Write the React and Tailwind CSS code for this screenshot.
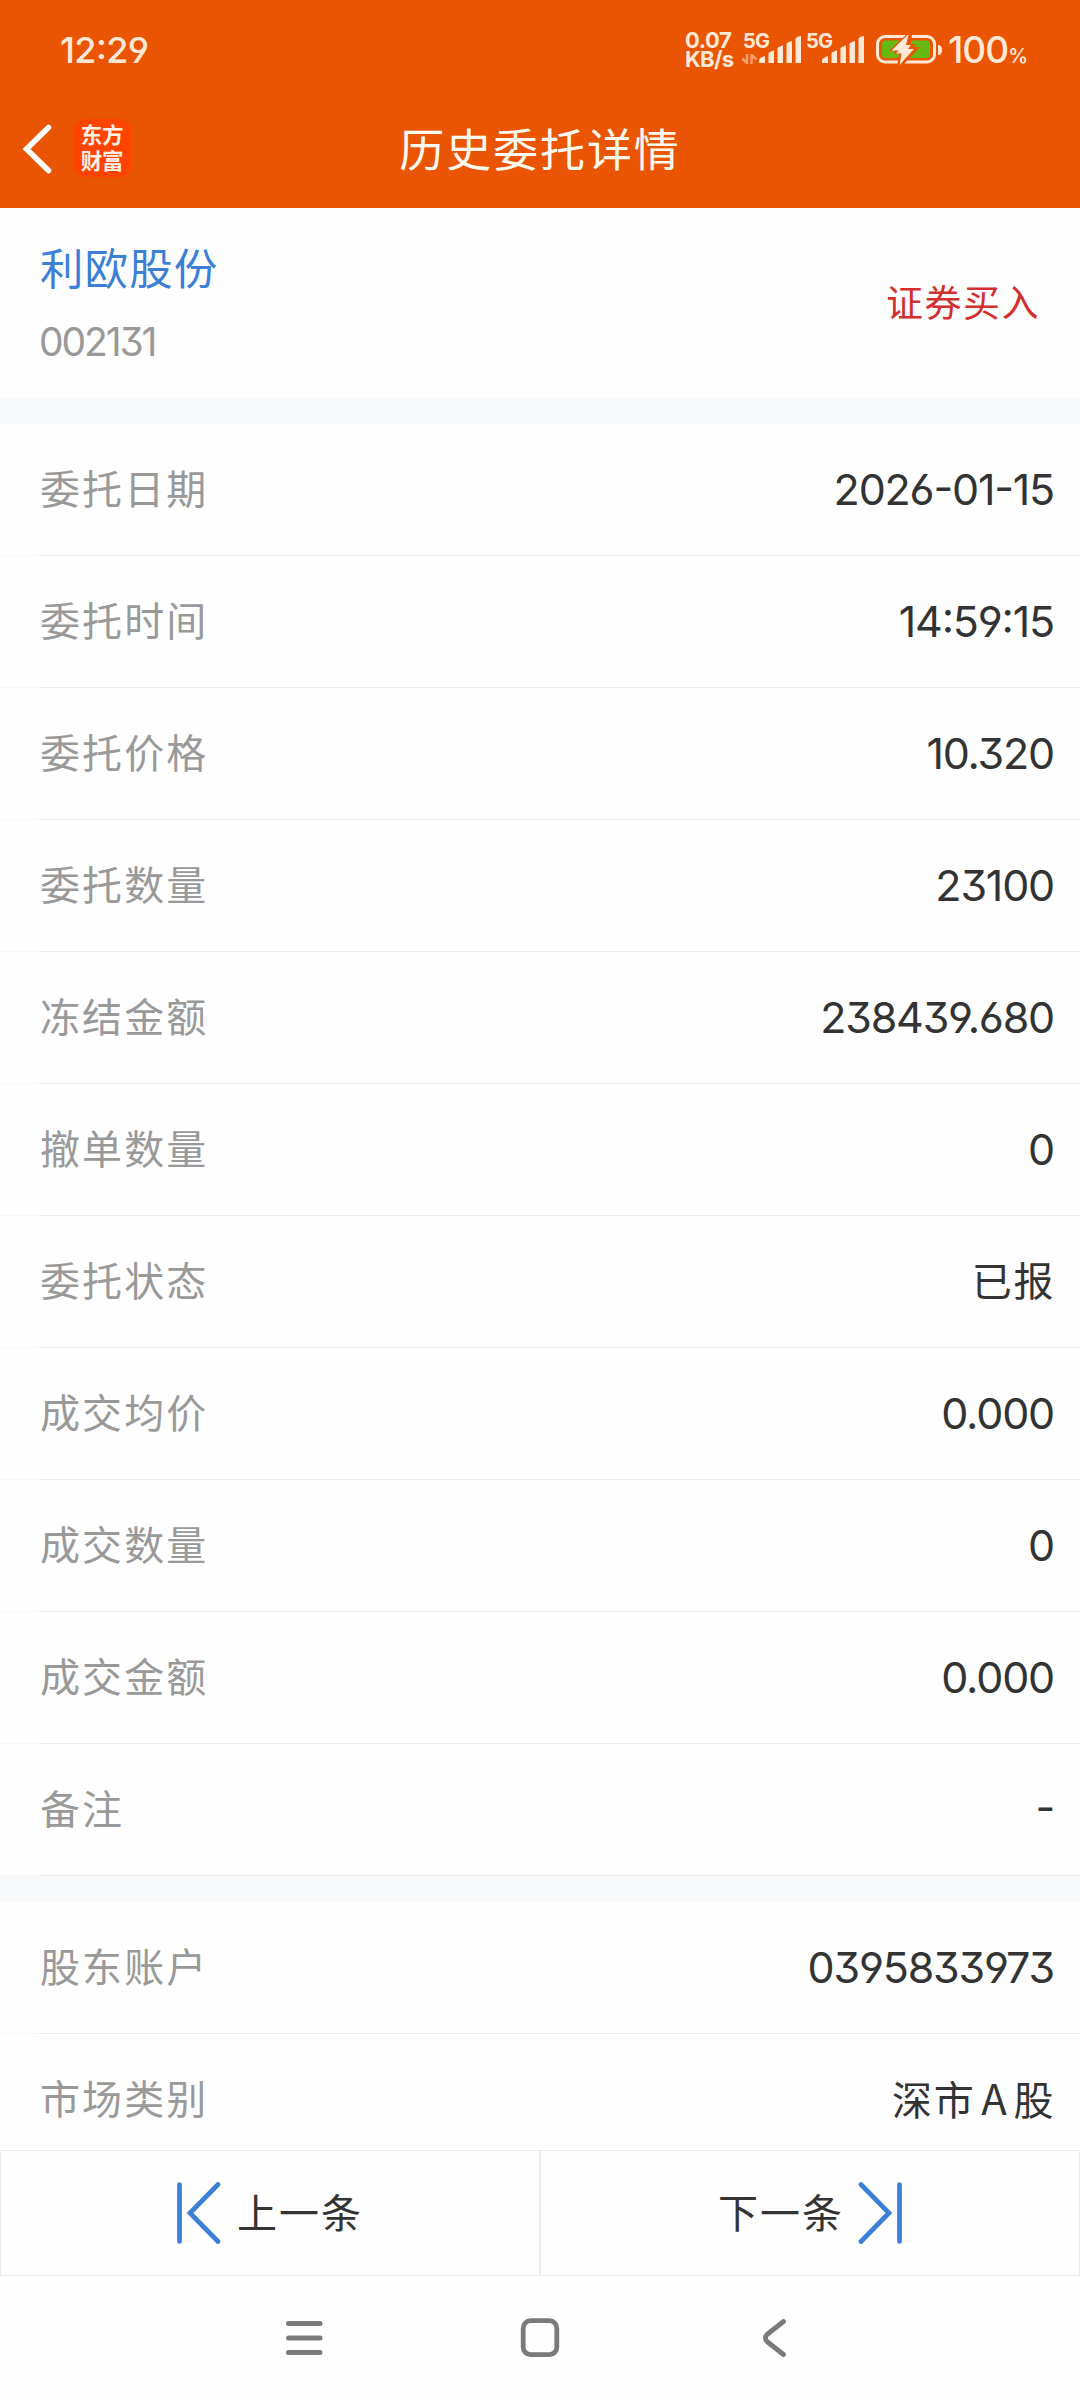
const CJK = "font-['Noto_Sans_CJK_SC',sans-serif]";
const NUM =
  "font-['Inter','Noto_Sans_CJK_SC',sans-serif] [font-feature-settings:'cv03','cv04','cv09','case']";

const orderRows = [
  ['委托日期', '2026-01-15'],
  ['委托时间', '14:59:15'],
  ['委托价格', '10.320'],
  ['委托数量', '23100'],
  ['冻结金额', '238439.680'],
  ['撤单数量', '0'],
  ['委托状态', '已报'],
  ['成交均价', '0.000'],
  ['成交数量', '0'],
  ['成交金额', '0.000'],
  ['备注', '-'],
];

const accountRows = [
  ['股东账户', '0395833973'],
  ['市场类别', <>深市<span className="ml-[6px] mr-[5px] text-[42px]">A</span>股</>],
];

function Row({ label, value }) {
  const isCjk = typeof value !== 'string' || /[\u4e00-\u9fff]/.test(value);
  return (
    <div className="flex h-[132px] shrink-0 flex-col">
      <div className="flex flex-1 items-center justify-between pl-10 pr-[26px]">
        <span className={`${CJK} mb-[5px] text-[40px] leading-none tracking-[2.1px] text-[#999999]`}>{label}</span>
        {isCjk ? (
          <span className={`${CJK} -mr-px mb-[5px] text-[40px] leading-none tracking-[1.6px] text-[#333333]`}>{value}</span>
        ) : (
          <span className={`${NUM} text-[43px] leading-none tracking-[-1.2px] text-[#333333]`}>{value}</span>
        )}
      </div>
      <div className="flex h-px">
        <div className="w-[39px] bg-[#f8f8f8]" />
        <div className="flex-1 bg-[#ebebeb]" />
      </div>
    </div>
  );
}

function Signal() {
  return (
    <svg width="42" height="27" viewBox="0 0 42 27" fill="#ffe9d6">
      <path d="M0 27v-2.500q0-2.500 6-4.500V27z" />
      <path d="M9.500 27V17.500q0-1.500 5.500-3V27z" />
      <path d="M18.500 27V12.500q0-1.500 5.500-3V27z" />
      <path d="M27.500 27V8q0-1.500 5.500-3V27z" />
      <path d="M36.500 27V3Q36.500 1 42 0v27z" />
    </svg>
  );
}

function StatusBar() {
  return (
    <div className="flex h-[100px] items-start justify-between pl-[60px] text-[#ffe9d6]">
      <span className={`${NUM} mt-[32px] text-[36px] font-medium leading-[36px] tracking-[-0.6px]`}>12:29</span>
      <div className="flex w-[396px] items-start">
        <div className={`${NUM} mt-[31px] w-[56px] pl-px text-[22px] font-bold leading-[19px]`}>
          <div className="tracking-[-0.4px]">0.07</div>
          <div className="tracking-[-0.7px]">KB/s</div>
        </div>
        <div className="relative ml-[1px] h-[70px] w-[64px]">
          <span className={`${NUM} absolute left-[2px] top-[31px] text-[20px] font-bold leading-[20px] tracking-[-0.8px]`}>5G</span>
          <svg className="absolute left-[1px] top-[54px]" width="15" height="10" viewBox="0 0 15 10" fill="none" stroke="#f7a06d" strokeWidth="2.500">
            <path d="M5 0v9L0 4.500M9.500 10V1l5 4.500" />
          </svg>
          <div className="absolute left-[18px] top-[36px]"><Signal /></div>
        </div>
        <div className="relative h-[70px] w-[71px]">
          <span className={`${NUM} absolute left-[1px] top-[31px] text-[20px] font-bold leading-[20px] tracking-[-0.8px]`}>5G</span>
          <div className="absolute left-[17px] top-[36px]"><Signal /></div>
        </div>
        <svg className="mt-[34px]" width="66" height="32" viewBox="0 0 66 32">
          <rect x="1.500" y="2.500" width="57" height="25.500" rx="7.500" fill="none" stroke="#ffe9d6" strokeWidth="3" />
          <rect x="6" y="6.500" width="48" height="17.500" rx="3.500" fill="#66b812" />
          <path d="M31 0 13 17h6l-2 3h6l-2 12h5L44 13h-6l2-3h-5l1-10z" fill="#ea5504" />
          <path d="M31.500 1 15.500 16.500h7l-2.500 3h5.500L23.500 31 38 15h-6l3-4h-5l2.500-10z" fill="#ffe9d6" />
          <path d="M62 11q4 0 4 5t-4 5z" fill="#ffe9d6" />
        </svg>
        <div className={`${NUM} ml-[6px] mt-[32px] flex items-baseline leading-[36px]`}>
          <span className="text-[37px] font-medium tracking-[-1px]">100</span>
          <span className="text-[20px] font-medium">%</span>
        </div>
      </div>
    </div>
  );
}

function TitleBar() {
  return (
    <div className="grid h-[108px] grid-cols-[1fr_auto_1fr] items-start">
      <div className="flex items-start pl-[22px] pt-[19px]">
        <svg className="mt-[5px]" width="30" height="50" viewBox="0 0 30 50" fill="none" stroke="#ffffff" strokeWidth="5.500" strokeLinejoin="miter" strokeLinecap="round">
          <path d="M26.500 3.500 4.500 25l22 21.500" />
        </svg>
        <div className={`${CJK} ml-[21px] grid size-[58px] content-center justify-center rounded-[13px] bg-[#ff4400] pb-[3px] text-[21.5px] font-bold leading-[26px] tracking-[-0.3px] text-[#fff1e6]`}>
          <span>东方</span>
          <span>财富</span>
        </div>
      </div>
      <h1 className={`${CJK} pt-[21px] text-[45px] leading-[54px] tracking-[1.9px] text-[#fffaf0]`}>历史委托详情</h1>
      <div />
    </div>
  );
}

function StepIcon({ flip }) {
  return (
    <svg className={flip ? '-scale-x-100' : ''} width="44" height="62" viewBox="0 0 44 62" fill="none" stroke="#3b7fd6" strokeWidth="4.700" strokeLinecap="round" strokeLinejoin="miter">
      <path d="M2.500 2.500v57M41 2.500 13 31l28 28.500" />
    </svg>
  );
}

export default function App() {
  return (
    <div className="flex h-[2400px] w-[1080px] flex-col overflow-hidden bg-[#fefefe]">
      <header className="h-[208px] shrink-0 bg-[#ea5504]">
        <StatusBar />
        <TitleBar />
      </header>

      <section className="flex h-[190px] shrink-0 items-start justify-between pl-10 pr-10">
        <div className="pt-[35px]">
          <div className={`${CJK} text-[43.5px] leading-[48px] tracking-[1.1px] text-[#3b7fd6]`}>利欧股份</div>
          <div className={`${NUM} -ml-px mt-[31px] text-[39px] leading-[40px] tracking-[-2.1px] text-[#999999]`}>002131</div>
        </div>
        <div className={`${CJK} pt-[69px] text-[37px] leading-[48px] tracking-[1.5px] text-[#d32f2f]`}>证券买入</div>
      </section>

      <div className="h-[26px] shrink-0 bg-[#f7f8fa]" />
      <section className="shrink-0">
        {orderRows.map(([label, value]) => <Row key={label} label={label} value={value} />)}
      </section>
      <div className="h-[26px] shrink-0 bg-[#f7f8fa]" />
      <section className="h-[248px] shrink-0 overflow-hidden">
        {accountRows.map(([label, value]) => <Row key={label} label={label} value={value} />)}
      </section>

      <div className={`${CJK} grid h-[126px] shrink-0 grid-cols-2 text-[40px] leading-none tracking-[2px] text-[#333333]`}>
        <button className="flex items-center border border-[#ebebeb] pl-[176px]">
          <StepIcon />
          <span className="mb-[5px] ml-[16px]">上一条</span>
        </button>
        <button className="flex items-center border border-[#ebebeb] pl-[177px]">
          <span className="mb-[5px] mr-[14px]">下一条</span>
          <StepIcon flip />
        </button>
      </div>

      <nav className="flex flex-1 items-start pl-[286px] pt-[42px]">
        <svg width="500" height="40" viewBox="0 0 500 40" fill="none" stroke="#7a7a7a" strokeLinecap="round" strokeLinejoin="round">
          <path d="M2.500 5.500h31.500M2.500 20h31.500M2.500 34.500h31.500" strokeWidth="5" />
          <rect x="237.200" y="2.700" width="33.600" height="34" rx="7.500" strokeWidth="4.800" />
          <path d="M497.500 3.500 481 16.500q-3 3.500 0 7L497.500 36.500" strokeWidth="4.800" />
        </svg>
      </nav>
    </div>
  );
}
